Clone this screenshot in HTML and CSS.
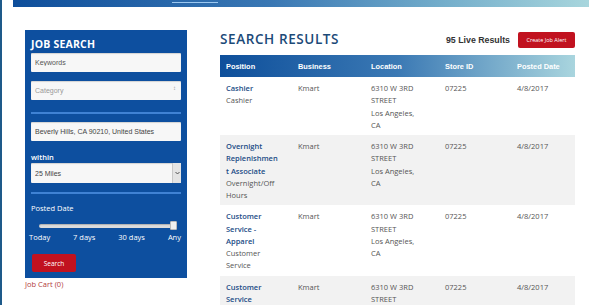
FILE: index.html
```html
<!DOCTYPE html>
<html lang="en">
<head>
  <meta charset="UTF-8">
  <title>Search Results</title>
  <meta name="viewport" content="width=device-width, initial-scale=1">
  <link rel="stylesheet" href="styles.css">
</head>
<body>

<div class="topbar"><span class="nav-mark"></span></div>

<div class="main">
  <aside class="side">
    <div class="panel">
      <h2>JOB SEARCH</h2>
      <input class="field" type="text" placeholder="Keywords">
      <div class="select">
        <span class="ph">Category</span>
        <span class="updown">&#8597;</span>
      </div>
      <div class="sep"></div>
      <input class="field loc" type="text" value="Beverly Hills, CA 90210, United States">
      <label class="lbl bold">within</label>
      <div class="select miles">
        <span>25 Miles</span>
        <span class="drop"><svg width="5" height="4" viewBox="0 0 5 4"><path d="M0.5 1 L2.5 3 L4.5 1" fill="none" stroke="#444" stroke-width="0.9"/></svg></span>
      </div>
      <div class="sep"></div>
      <label class="lbl">Posted Date</label>
      <div class="slider">
        <div class="track"></div>
        <span class="handle"></span>
      </div>
      <div class="ticks">
        <span>Today</span><span>7 days</span><span>30 days</span><span>Any</span>
      </div>
      <button class="btn-red search">Search</button>
    </div>
    <a class="cart" href="#">Job Cart (0)</a>
  </aside>

  <section class="results">
    <div class="res-head">
      <h1>SEARCH RESULTS</h1>
      <span class="count">95 Live Results</span>
      <button class="btn-red alert">Create Job Alert</button>
    </div>

    <table class="jobs">
      <colgroup>
        <col style="width:72px"><col style="width:73px"><col style="width:74px"><col style="width:72px"><col>
      </colgroup>
      <thead>
        <tr><th>Position</th><th>Business</th><th>Location</th><th>Store ID</th><th>Posted Date</th></tr>
      </thead>
      <tbody>
        <tr>
          <td><a href="#">Cashier</a><br>Cashier</td>
          <td>Kmart</td>
          <td>6310 W 3RD STREET<br>Los Angeles, CA</td>
          <td>07225</td>
          <td>4/8/2017</td>
        </tr>
        <tr>
          <td><a href="#">Overnight Replenishment Associate</a><br>Overnight/Off Hours</td>
          <td>Kmart</td>
          <td>6310 W 3RD STREET<br>Los Angeles, CA</td>
          <td>07225</td>
          <td>4/8/2017</td>
        </tr>
        <tr>
          <td><a href="#">Customer Service - Apparel</a><br>Customer Service</td>
          <td>Kmart</td>
          <td>6310 W 3RD STREET<br>Los Angeles, CA</td>
          <td>07225</td>
          <td>4/8/2017</td>
        </tr>
        <tr>
          <td><a href="#">Customer Service</a><br>Customer Service</td>
          <td>Kmart</td>
          <td>6310 W 3RD STREET<br>Los Angeles, CA</td>
          <td>07225</td>
          <td>4/8/2017</td>
        </tr>
      </tbody>
    </table>
  </section>
</div>

</body>
</html>
```

FILE: styles.css
```css
body {
  margin: 0;
  padding: 0;
  font-family: 'Open Sans', sans-serif;
  background: #fff;
  border-left: 2px solid #1e5a8a;
  min-height: 305px;
  box-sizing: border-box;
  overflow: hidden;
}
.topbar {
  height: 7px;
  margin: 0 11px;
  background: linear-gradient(90deg, #0e4e9b, #3a78b4 45%, #74aecb 75%, #a8d6dd);
  position: relative;
}
.nav-mark {
  position: absolute;
  left: 159px;
  top: 2px;
  width: 46px;
  height: 1px;
  background: #9cc8f0;
}
.main {
  display: flex;
  gap: 33px;
  padding: 23px 0 0 23px;
}
.side {
  width: 162px;
  flex: none;
}
.panel {
  background: #0d4f9f;
  padding: 6px;
  display: flex;
  flex-direction: column;
}
.panel h2 {
  margin: 1px 0 2px;
  color: #fff;
  font-size: 10.5px;
  line-height: 14px;
  font-weight: 700;
  letter-spacing: 0.2px;
}
.field, .select {
  box-sizing: border-box;
  width: 150px;
  height: 19px;
  border: none;
  border-radius: 1px;
  background: #f7f7f7;
  box-shadow: inset 0 1px 1px rgba(0,0,0,0.15);
  font-family: 'Liberation Sans', Arial, sans-serif;
  font-size: 7px;
  color: #444;
  padding: 0 4px;
  margin: 0 0 9px;
  outline: none;
}
.field::placeholder {
  color: #555;
}
.select {
  position: relative;
  display: flex;
  align-items: center;
}
.select .ph {
  color: #999;
}
.updown {
  position: absolute;
  right: 5px;
  top: 4px;
  font-size: 6px;
  color: #999;
}
.sep {
  height: 2px;
  background: #3f82d4;
  margin: 3px 0 8px;
}
.loc {
  margin-bottom: 0;
}
.lbl {
  color: #fff;
  font-size: 7.5px;
  line-height: 12px;
  margin-top: 10px;
}
.lbl.bold {
  font-weight: 600;
}
.miles {
  height: 20px;
  margin-bottom: 0;
  color: #444;
}
.drop {
  position: absolute;
  right: 0;
  top: 0;
  width: 8px;
  height: 20px;
  background: #e4e4e4;
  border-left: 1px solid #c8c8c8;
  display: flex;
  align-items: center;
  justify-content: center;
}
.miles + .sep {
  margin-top: 9px;
}
.sep + .lbl {
  margin-top: 0;
}
.slider {
  position: relative;
  height: 10px;
  margin: 7px 5px 0 8px;
}
.track {
  position: absolute;
  left: 0;
  right: 0;
  top: 3px;
  height: 4px;
  background: #dcdcdc;
  border-radius: 2px;
  box-shadow: inset 0 1px 1px rgba(0,0,0,0.2);
}
.handle {
  position: absolute;
  right: -1px;
  top: 0;
  width: 7px;
  height: 9px;
  background: #f0f0f0;
  border: 1px solid #bbb;
  border-radius: 1px;
  box-sizing: border-box;
}
.ticks {
  display: flex;
  justify-content: space-between;
  margin: 1px 0 0 -2px;
  color: #fff;
  font-size: 7.5px;
  line-height: 10px;
}
.btn-red {
  background: #c1121f;
  color: #fff;
  border: none;
  border-radius: 2px;
  font-family: 'Open Sans', sans-serif;
  cursor: pointer;
  padding: 0;
}
.search {
  width: 44px;
  height: 18px;
  margin: 12px 0 0 1px;
  font-size: 6.5px;
}
.cart {
  display: block;
  margin-top: 1px;
  font-size: 7.5px;
  color: #b33a3a;
  text-decoration: none;
}
.results {
  width: 355px;
  flex: none;
  padding-top: 2px;
}
.res-head {
  display: flex;
  align-items: center;
  height: 16px;
  margin-bottom: 7px;
}
.res-head h1 {
  margin: 0 auto 3px 0;
  font-size: 13.5px;
  font-weight: 600;
  letter-spacing: 0.6px;
  color: #1c4a78;
  line-height: 16px;
}
.count {
  font-family: 'Liberation Sans', Arial, sans-serif;
  font-weight: 700;
  font-size: 8.8px;
  color: #333;
  margin-right: 8px;
}
.alert {
  width: 57px;
  height: 16px;
  font-size: 5.5px;
}
.jobs {
  width: 355px;
  border-collapse: collapse;
  table-layout: fixed;
}
.jobs thead tr {
  background: linear-gradient(90deg, #0e4f9b, #3b79b4 50%, #a9d5de);
}
.jobs th {
  height: 22px;
  padding: 0 6px;
  text-align: left;
  color: #fff;
  font-family: 'Liberation Sans', Arial, sans-serif;
  font-weight: 700;
  font-size: 7.4px;
}
.jobs td {
  vertical-align: top;
  padding: 5px 14px 4px 6px;
  font-size: 7.5px;
  line-height: 12.25px;
  color: #555;
  overflow-wrap: anywhere;
}
.jobs td a {
  color: #1b4c86;
  font-weight: 600;
  text-decoration: none;
}
.jobs tbody tr:nth-child(even) {
  background: #f2f2f2;
}
```
